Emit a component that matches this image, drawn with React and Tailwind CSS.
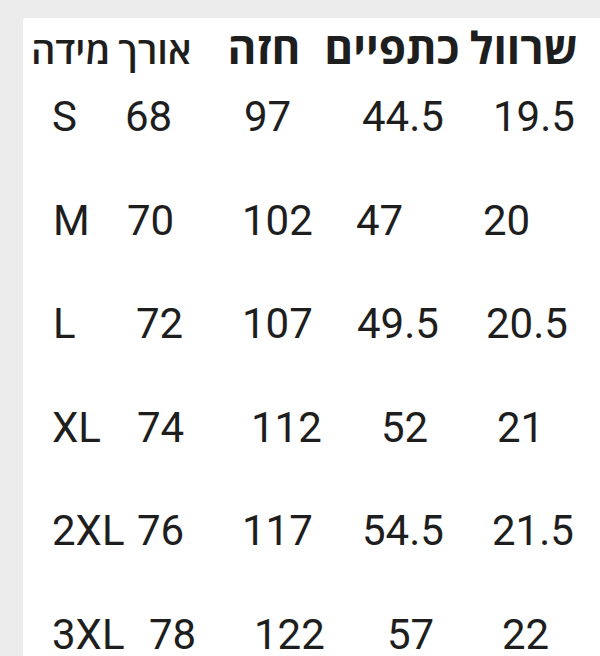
import React from 'react';

const rows = [
  { cells: ['S', '68', '97', '44.5', '19.5'], offs: ['ml-[0px]', 'ml-[0px]', 'ml-[2px]', 'ml-[6px]', 'ml-[10px]'] },
  { cells: ['M', '70', '102', '47', '20'], offs: ['ml-[1px]', 'ml-[2px]', 'ml-[0px]', 'ml-[0px]', 'ml-[0px]'] },
  { cells: ['L', '72', '107', '49.5', '20.5'], offs: ['ml-[1px]', 'ml-[11px]', 'ml-[0px]', 'ml-[1px]', 'ml-[3px]'] },
  { cells: ['XL', '74', '112', '52', '21'], offs: ['ml-[0px]', 'ml-[12px]', 'ml-[9px]', 'ml-[25px]', 'ml-[14px]'] },
  { cells: ['2XL', '76', '117', '54.5', '21.5'], offs: ['ml-[0px]', 'ml-[12px]', 'ml-[0px]', 'ml-[6px]', 'ml-[9px]'] },
  { cells: ['3XL', '78', '122', '57', '22'], offs: ['ml-[0px]', 'ml-[24px]', 'ml-[12px]', 'ml-[31px]', 'ml-[19px]'] },
];

const hebrew = { fontFamily: '"Open Sans", "Liberation Sans", "DejaVu Sans", sans-serif' };
const digits = { fontFamily: 'Roboto, "Liberation Sans", sans-serif' };

export default function App() {
  return (
    <div className="w-[600px] h-[656px] overflow-hidden bg-[#ececec] pt-[18px] pl-[23px]">
      <div className="h-full bg-white rounded-tl-[3px] text-[#1e1e1e]">
        {/* header, right to left */}
        <div dir="rtl" className="flex items-baseline h-[60px] pt-[7px] pr-[22px] whitespace-nowrap" style={hebrew}>
          <span className="text-[44px] font-bold leading-none">שרוול</span>
          <span className="text-[44px] font-bold leading-none mr-[10px]">כתפיים</span>
          <span className="text-[44px] font-bold leading-none mr-[24px]">חזה</span>
          <span className="text-[38px] font-semibold leading-none mr-[36px]">אורך</span>
          <span className="text-[38px] font-semibold leading-none mr-[8px]">מידה</span>
        </div>

        {/* size rows */}
        <div className="pt-[18px]" style={digits}>
          {rows.map((row) => (
            <div key={row.cells[0]} className="grid grid-cols-[73px_117px_114px_127px_1fr] pl-[29px] h-[103.6px] text-[42px] font-normal leading-none">
              {row.cells.map((c, i) => (
                <span key={i} className={row.offs[i]}>{c}</span>
              ))}
            </div>
          ))}
        </div>
      </div>
    </div>
  );
}
